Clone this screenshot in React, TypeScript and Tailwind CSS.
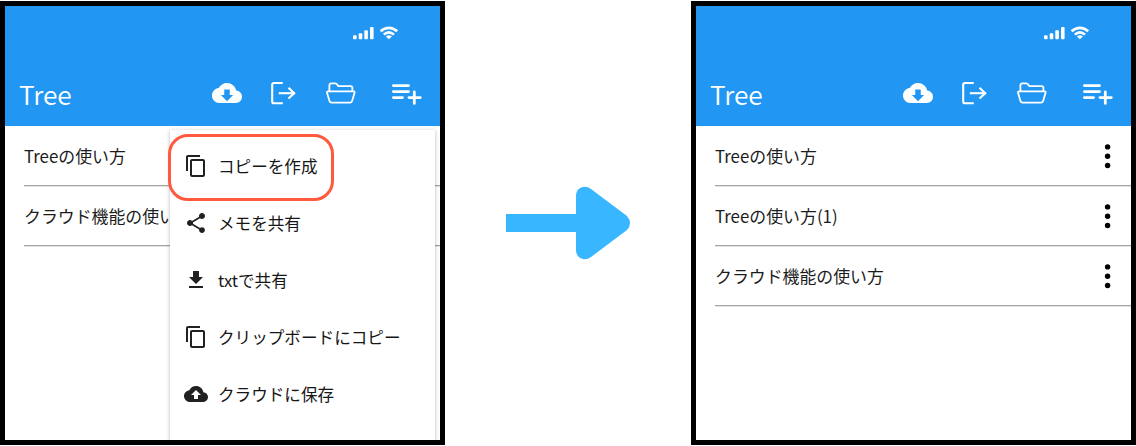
import type { ReactNode } from "react";

const FONT = "font-['Noto_Sans_CJK_JP','Noto_Sans',sans-serif]";

function SignalIcon() {
  return (
    <svg width="22" height="14" viewBox="0 0 22 14" fill="white">
      <rect x="0" y="9.2" width="3.6" height="4" rx="1" />
      <rect x="5.7" y="7.2" width="3.6" height="6" rx="1" />
      <rect x="11.3" y="4.2" width="3.6" height="9" rx="1" />
      <rect x="17" y="1" width="3.6" height="12.2" rx="1" />
    </svg>
  );
}

function WifiIcon() {
  return (
    <svg width="20" height="14" viewBox="0 0 20 14" fill="none" stroke="white" strokeWidth="2.6">
      <path d="M0.6 5.3C5.6 0.7 12.2 0.7 17.2 5.3" />
      <path d="M3.8 8.6C7 5.7 10.8 5.7 14 8.6" />
      <path d="M5.9 10.4C7.7 8.9 10.1 8.9 11.9 10.4L8.9 13.3Z" fill="white" stroke="none" />
    </svg>
  );
}

function CloudDownloadIcon() {
  return (
    <svg width="30" height="30" viewBox="0 0 24 24" fill="white">
      <path d="M19.35 10.04C18.67 6.59 15.64 4 12 4 9.11 4 6.6 5.64 5.35 8.04 2.34 8.36 0 10.91 0 14c0 3.31 2.69 6 6 6h13c2.76 0 5-2.24 5-5 0-2.64-2.05-4.78-4.65-4.96zM16.9 13.6l-4.9 4.9-4.9-4.9h2.7V9.2h4.4v4.4h2.7z" />
    </svg>
  );
}

function ExportIcon() {
  return (
    <svg width="26" height="30" viewBox="0 0 26 30" fill="none" stroke="white" strokeWidth="2.1">
      <path d="M12.8 5H4Q2.2 5 2.2 6.8V23.5Q2.2 25.3 4 25.3H12.8" />
      <path d="M8.8 15.2H24.8" />
      <path d="M18.5 9.8L24.2 15.2L18.5 20.6" />
    </svg>
  );
}

function FolderIcon() {
  return (
    <svg width="30" height="30" viewBox="0 0 30 30" fill="none" stroke="white" strokeWidth="1.8" strokeLinejoin="round">
      <path d="M3.4 13.5V7.4Q3.4 5.4 5.4 5.4H9.2Q10.4 5.4 11.2 6.6L12.4 8.2H24.6Q26.4 8.2 26.4 10V13.5" />
      <path d="M2.2 13.4H27.4Q29 13.4 28.5 15L26.1 23Q25.6 24.6 24 24.6H5.6Q4 24.6 3.5 23L1.1 15Q0.6 13.4 2.2 13.4Z" />
    </svg>
  );
}

function AddListIcon() {
  return (
    <svg width="31" height="30" viewBox="0 0 31 30" fill="none" stroke="white" strokeWidth="2.8" strokeLinecap="round">
      <path d="M1.4 7.6H16.5M1.4 13.6H16.5M1.4 19.6H10.5M17 19.6H28.3M22.3 14V25.4" />
    </svg>
  );
}

function MenuGlyph({ d }: { d: string }) {
  return (
    <svg width="24" height="24" viewBox="0 0.9 24 24" fill="#212121" className="shrink-0">
      <path d={d} />
    </svg>
  );
}

const COPY = "M16 1H4c-1.1 0-2 .9-2 2v14h2V3h12V1zm3 4H8c-1.1 0-2 .9-2 2v14c0 1.1.9 2 2 2h11c1.1 0 2-.9 2-2V7c0-1.1-.9-2-2-2zm0 16H8V7h11v14z";
const SHARE = "M18 16.08c-.76 0-1.44.3-1.96.77L8.91 12.7c.05-.23.09-.46.09-.7s-.04-.47-.09-.7l7.05-4.11c.54.5 1.25.81 2.04.81 1.66 0 3-1.34 3-3s-1.34-3-3-3-3 1.34-3 3c0 .24.04.47.09.7L8.04 9.81C7.5 9.31 6.79 9 6 9c-1.66 0-3 1.34-3 3s1.34 3 3 3c.79 0 1.5-.31 2.04-.81l7.12 4.16c-.05.21-.08.43-.08.65 0 1.61 1.31 2.92 2.92 2.92 1.61 0 2.92-1.31 2.92-2.92s-1.31-2.92-2.92-2.92z";
const DOWNLOAD = "M19 9h-4V3H9v6H5l7 7 7-7zM5 18v2h14v-2H5z";
const CLOUD_UPLOAD = "M19.35 10.04C18.67 6.59 15.64 4 12 4 9.11 4 6.6 5.64 5.35 8.04 2.34 8.36 0 10.91 0 14c0 3.31 2.69 6 6 6h13c2.76 0 5-2.24 5-5 0-2.64-2.05-4.78-4.65-4.96zM14 13v4h-4v-4H7l5-5 5 5h-3z";

const MENU = [
  { label: "コピーを作成", icon: COPY },
  { label: "メモを共有", icon: SHARE },
  { label: "txtで共有", icon: DOWNLOAD },
  { label: "クリップボードにコピー", icon: COPY },
  { label: "クラウドに保存", icon: CLOUD_UPLOAD },
];

function Phone({ notes, children }: { notes: string[]; children?: ReactNode }) {
  return (
    <section className="relative mt-px h-[444px] w-[445px] shrink-0 overflow-hidden border-[5px] border-black bg-white">
      <header className="flex h-[120px] flex-col bg-[#2196f3] text-white">
        <div className="flex h-[60px] items-start justify-end gap-[5px] pt-5 pr-[40px]">
          <SignalIcon />
          <WifiIcon />
        </div>
        <div className="flex h-[60px] items-start pt-3 pl-[14px]">
          <h1 className="-mt-0.5 w-[193px] text-[26.3px] leading-[36px] font-[350]">Tree</h1>
          <CloudDownloadIcon />
          <div className="ml-[28px]"><ExportIcon /></div>
          <div className="ml-[30px]"><FolderIcon /></div>
          <div className="ml-[36px]"><AddListIcon /></div>
        </div>
      </header>
      <ul className="pl-[19px]">
        {notes.map((note) => (
          <li key={note} className="flex h-[60px] items-center justify-between border-b border-[#a4a4a4] pr-[19px] text-[16.9px] text-[#1c1c1c] shadow-[0_1px_0_#e4e4e4]">
            <span className="whitespace-nowrap">{note}</span>
            <svg width="8" height="26" viewBox="0 0 8 26" fill="black" className="shrink-0">
              <circle cx="3.6" cy="3.9" r="2.7" />
              <circle cx="3.6" cy="13.2" r="2.7" />
              <circle cx="3.6" cy="22.5" r="2.7" />
            </svg>
          </li>
        ))}
      </ul>
      {children}
    </section>
  );
}

function ActionMenu() {
  return (
    <div className="absolute top-[124px] left-[165px] h-[330px] w-[265px] bg-white pt-[8px] shadow-[0_1px_4px_rgba(0,0,0,0.28)]">
      {MENU.map((item) => (
        <div key={item.label} className="flex h-[57px] items-center gap-[10.4px] pl-[13.6px] text-[16.6px] text-[#161616]">
          <MenuGlyph d={item.icon} />
          <span className="whitespace-nowrap">{item.label}</span>
        </div>
      ))}
      <div className="absolute top-[4px] left-[-2px] h-[67px] w-[166px] rounded-[20px] border-[3px] border-[#ff5a3d]" />
    </div>
  );
}

export default function App() {
  return (
    <main className={`flex h-[446px] w-[1136px] items-start justify-between overflow-hidden bg-white ${FONT}`}>
      <Phone notes={["Treeの使い方", "クラウド機能の使い方"]}>
        <ActionMenu />
      </Phone>
      <svg width="126" height="74" viewBox="-1 0 126 74" fill="#38b6ff" className="mt-[186px]">
        <path d="M0 28H70V10C70 2 78-2 85 3L121 30Q127 37 121 44L85 71C78 76 70 72 70 64V46H0Z" />
      </svg>
      <Phone notes={["Treeの使い方", "Treeの使い方(1)", "クラウド機能の使い方"]} />
    </main>
  );
}
